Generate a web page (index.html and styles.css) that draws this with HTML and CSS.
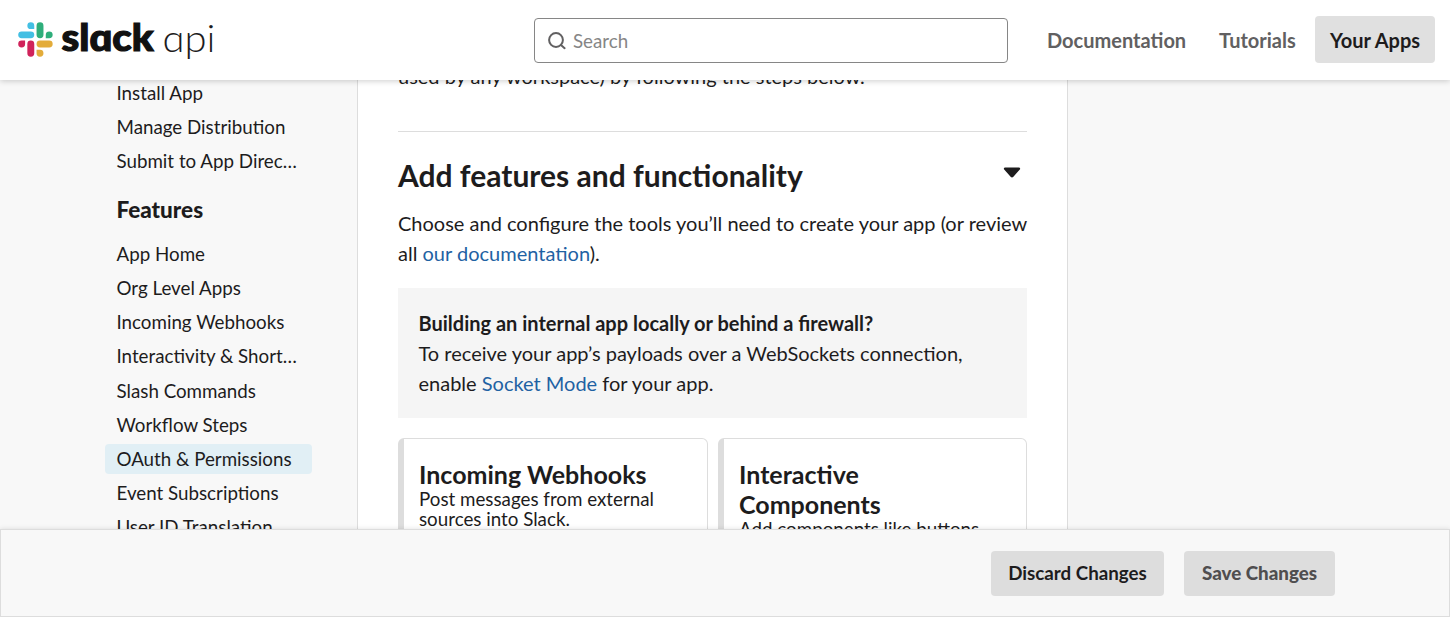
FILE: index.html
```html
<!DOCTYPE html>
<html lang="en">
<head>
<meta charset="utf-8">
<title>Slack API: Applications</title>
<link rel="stylesheet" href="styles.css">
</head>
<body>
<header class="header">
  <a class="logo" aria-label="slack api">
    <svg width="204" height="46" viewBox="0 0 204 46">
      <g transform="translate(4.2 7.2) scale(.6396)">
        <path fill="#43bfe3" d="M19.7 0a5.4 5.4 0 0 0 0 10.8h5.4V5.4A5.4 5.4 0 0 0 19.7 0m0 14.4H5.4a5.4 5.4 0 0 0 0 10.8h14.3a5.4 5.4 0 0 0 0-10.8"/>
        <path fill="#2fae7b" d="M53.9 19.8a5.4 5.4 0 0 0-10.8 0v5.4h5.4a5.4 5.4 0 0 0 5.4-5.4m-14.4 0V5.4a5.4 5.4 0 0 0-10.8 0v14.4a5.4 5.4 0 0 0 10.8 0"/>
        <path fill="#e3ac3a" d="M34.1 54a5.4 5.4 0 0 0 0-10.8h-5.4v5.4a5.4 5.4 0 0 0 5.4 5.4m0-14.4h14.4a5.4 5.4 0 0 0 0-10.8H34.1a5.4 5.4 0 0 0 0 10.8"/>
        <path fill="#d0235b" d="M0 34.2a5.4 5.4 0 0 0 10.8 0v-5.4H5.4A5.4 5.4 0 0 0 0 34.2m14.3 0v14.4a5.4 5.4 0 0 0 10.8 0V34.2a5.4 5.4 0 0 0-10.8 0"/>
      </g>
      <text class="logo-word" x="47.500" y="36.200" textLength="92" lengthAdjust="spacingAndGlyphs">slɑck</text>
      <text class="logo-api" x="148.500" y="36.500" textLength="53" lengthAdjust="spacingAndGlyphs">ɑpi</text>
    </svg>
  </a>
  <div class="search">
    <svg class="search-icon" width="18" height="18" viewBox="0 0 18 18" fill="none" stroke="#616061" stroke-width="2" stroke-linecap="round"><circle cx="8" cy="8" r="6.9"/><path d="M13 13l3.600 3.200"/></svg>
    <span>Search</span>
  </div>
  <nav class="nav">
    <a class="nav-docs">Documentation</a>
    <a class="nav-tutorials">Tutorials</a>
    <a class="nav-apps">Your Apps</a>
  </nav>
</header>
<main class="main">
  <aside class="sidebar">
    <ul class="menu">
      <li>Install App</li>
      <li>Manage Distribution</li>
      <li>Submit to App Direc…</li>
    </ul>
    <h4 class="menu-title">Features</h4>
    <ul class="menu">
      <li>App Home</li>
      <li>Org Level Apps</li>
      <li>Incoming Webhooks</li>
      <li>Interactivity &amp; Short…</li>
      <li>Slash Commands</li>
      <li>Workflow Steps</li>
      <li class="active">OAuth &amp; Permissions</li>
      <li>Event Subscriptions</li>
      <li>User ID Translation</li>
    </ul>
  </aside>
  <section class="panel">
    <p class="intro">used by any workspace) by following the steps below.</p>
    <div class="section-head">
      <h2>Add features and functionality</h2>
      <svg class="caret" width="18" height="12" viewBox="0 0 18 12"><path fill="#1d1c1d" d="M2 .6h14a1.100 1.100 0 0 1 .8 1.900L10.400 9.800a1.900 1.900 0 0 1-2.800 0L1.200 2.500A1.100 1.100 0 0 1 2 .6z"/></svg>
    </div>
    <p class="lead">Choose and configure the tools you’ll need to create your app (or review<br>all <a>our documentation</a>).</p>
    <div class="notice">
      <strong>Building an internal app locally or behind a firewall?</strong><br>
      To receive your app’s payloads over a WebSockets connection,<br>enable <a>Socket Mode</a> for your app.
    </div>
    <div class="cards">
      <article class="card"><h3>Incoming Webhooks</h3><p>Post messages from external<br>sources into Slack.</p></article>
      <article class="card"><h3>Interactive<br>Components</h3><p>Add components like buttons</p></article>
    </div>
  </section>
</main>
<footer class="footer">
  <button class="btn discard">Discard Changes</button>
  <button class="btn save">Save Changes</button>
</footer>
</body>
</html>
```
FILE: styles.css
```css
* { box-sizing: border-box; }
body {
  margin: 0;
  height: 617px;
  overflow: hidden;
  display: flex;
  flex-direction: column;
  background: #f8f8f8;
  color: #1d1c1d;
  font: 20px/30px Lato, "Liberation Sans", sans-serif;
}
h2, h3, h4, p, ul { margin: 0; padding: 0; }
a { color: #1f62a3; }

.header {
  flex: none;
  height: 80px;
  display: flex;
  align-items: flex-start;
  background: #fff;
  box-shadow: 0 1px 6px rgba(0, 0, 0, .2);
  z-index: 2;
}
.logo { width: 204px; height: 46px; margin: 15px 316px 0 14px; }
.logo svg { display: block; overflow: visible; }
.logo-word { font: 900 37.5px Lato, sans-serif; fill: #111; stroke: #111; stroke-width: 1.2px; }
.logo-api { font: 300 38px Lato, sans-serif; fill: #1d1c1d; }
.search {
  width: 474px;
  height: 45px;
  margin-top: 18px;
  padding: 0 0 0 13px;
  display: flex;
  align-items: center;
  gap: 7px;
  border: 1px solid #868686;
  border-radius: 4px;
  color: #868686;
}
.search span { font-size: 18.75px; }
.nav { display: flex; margin-left: 39px; padding-top: 16px; line-height: 49px; font-weight: 700; }
.nav a { color: #616061; white-space: nowrap; }
.nav-docs { width: 172px; }
.nav-tutorials { width: 96px; }
.nav .nav-apps { width: 120px; height: 47px; border-radius: 4px; background: #e0e0e0; color: #1d1c1d; text-align: center; }

.main { flex: none; height: 449px; display: flex; overflow: hidden; }
.sidebar { width: 357px; padding-left: 105px; margin-top: -2px; }
.menu { width: 207px; list-style: none; font-size: 18.75px; }
.menu li {
  height: 30px;
  margin-bottom: 4.17px;
  padding: 0 11.5px;
  border-radius: 4px;
  white-space: nowrap;
}
.menu .active { background: #e1eff5; }
.menu-title { margin: 18.500px 0 14.200px 11.5px; font-size: 22.5px; font-weight: 900; line-height: 30px; }

.panel { width: 711px; height: 600px; padding: 0 40px; border: solid #ddd; border-width: 0 1px; background: #fff; }
.intro { margin-top: -19px; padding-bottom: 40px; border-bottom: 1px solid #ddd; }
.section-head { display: flex; justify-content: space-between; padding-top: 23px; }
.section-head h2 { font-size: 30px; font-weight: 700; line-height: 40px; }
.caret { margin: 12px 6px 0 0; }
.lead { padding-top: 13px; white-space: nowrap; }
.notice { height: 130px; margin-top: 20px; padding: 20px; padding-left: 20.5px; background: #f5f5f5; white-space: nowrap; }
.cards { display: grid; grid-template-columns: 310px 309px; gap: 10px; margin-top: 20px; }
.card {
  height: 160px;
  padding: 20px 15px;
  border: 1px solid #ddd;
  border-left-width: 6px;
  border-radius: 6px;
}
.card h3 { font-size: 25px; line-height: 30px; }
.card p { font-size: 18.75px; line-height: 20px; white-space: nowrap; }

.footer {
  flex: none;
  height: 88px;
  display: flex;
  justify-content: flex-end;
  gap: 20px;
  padding: 21px 114px 0 0;
  border: 1px solid #ddd;
  background: #f8f8f8;
  box-shadow: 0 0 5px rgba(0, 0, 0, .12);
  z-index: 1;
}
.btn {
  height: 45px;
  padding: 0 0 2px;
  border: 0;
  border-radius: 4px;
  background: #ddd;
  color: #1d1c1d;
  font: 700 18.75px/43px Lato, sans-serif;
}
.discard { width: 173px; }
.save { width: 151px; color: #4f4e4f; font-weight: 900; }
```
